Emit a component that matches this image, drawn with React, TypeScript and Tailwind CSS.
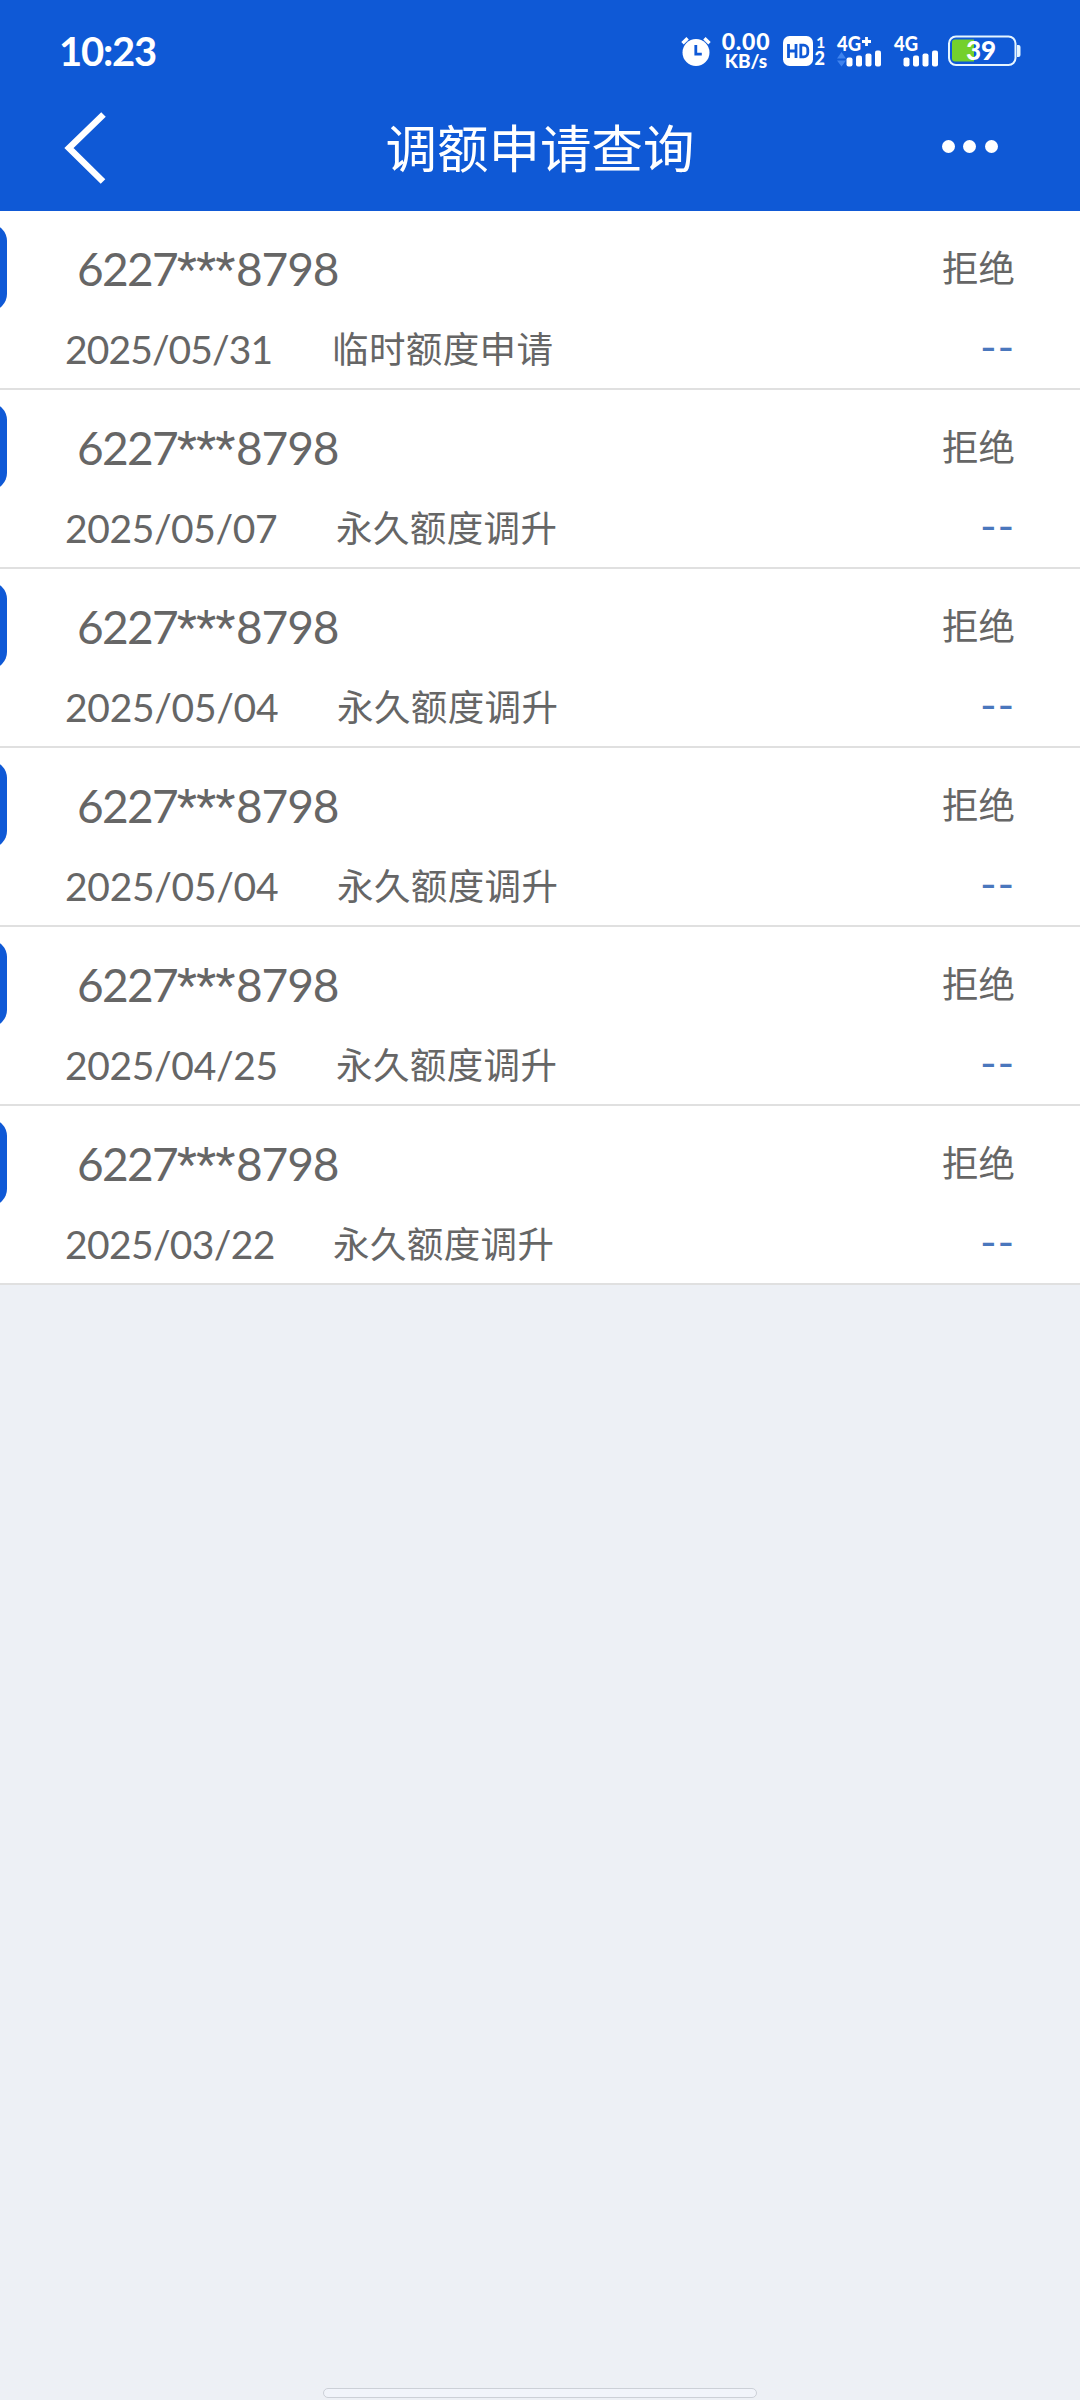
interface QuotaRecord {
  date: string;
  dateClass: string;
  type: string;
}

const records: QuotaRecord[] = [
  { date: "2025/05/31", dateClass: "w-[267px] tracking-[-0.9px]", type: "临时额度申请" },
  { date: "2025/05/07", dateClass: "w-[271px] tracking-[-0.4px]", type: "永久额度调升" },
  { date: "2025/05/04", dateClass: "w-[272px] tracking-[-0.3px]", type: "永久额度调升" },
  { date: "2025/05/04", dateClass: "w-[272px] tracking-[-0.3px]", type: "永久额度调升" },
  { date: "2025/04/25", dateClass: "w-[271px] tracking-[-0.35px]", type: "永久额度调升" },
  { date: "2025/03/22", dateClass: "w-[268px] tracking-[-0.65px]", type: "永久额度调升" },
];

function AlarmIcon() {
  return (
    <svg className="h-[30px] w-[30px]" viewBox="0 0 30 30" fill="none">
      <circle cx="15" cy="16.5" r="13.5" fill="#fff" />
      <path d="M1.5 7.2 6.6 2.2M28.5 7.2 23.4 2.2" stroke="#fff" strokeWidth="3.4" />
      <path d="M14.8 9v9.2h6" stroke="#0f59d6" strokeWidth="2.8" />
    </svg>
  );
}

function NetSpeed() {
  return (
    <div className="flex w-[50px] flex-col items-center font-black text-white">
      <span className="h-[20px] text-[23px] leading-[16px] tracking-[0.8px]">0.00</span>
      <span className="h-[17px] text-[19px] leading-[15px]">KB/s</span>
    </div>
  );
}

function HdIcon() {
  return (
    <svg className="h-[40px] w-[46px]" viewBox="0 0 46 40" fill="none">
      <rect x="0" y="5" width="30" height="30" rx="6.5" fill="#fff" />
      <path
        d="M5.5 13v14M13 13v14M5.5 20H13M17.8 14.2v11.6h3a4 4 0 0 0 4-4v-3.6a4 4 0 0 0-4-4z"
        stroke="#0f59d6"
        strokeWidth="2.8"
      />
      <text x="33" y="17" fontSize="16" fontWeight="700" fill="#fff">
        1
      </text>
      <text x="31.5" y="34" fontSize="18" fontWeight="900" fill="#fff">
        2
      </text>
    </svg>
  );
}

function SignalIcon({ plus = false }: { plus?: boolean }) {
  return (
    <svg className="h-[40px] w-[46px]" viewBox="0 0 46 40">
      <text x="1" y="20" fontSize="20" fontWeight="900" fill="#fff" textLength={24} lengthAdjust="spacingAndGlyphs">
        4G
      </text>
      {plus && (
        <>
          <path d="M26 10.5h9M30.5 6v9" stroke="#fff" strokeWidth="2.8" />
          <path d="M1 27.5 5.5 21l4.5 6.5zM1 29.5l4.5 6 4.5-6z" fill="#3f83ee" />
        </>
      )}
      <rect x="10.5" y="26.5" width="6" height="9" rx="2" fill="#fff" />
      <rect x="20" y="24.5" width="6" height="11" rx="2" fill="#fff" />
      <rect x="29.5" y="22.5" width="6" height="13" rx="2" fill="#fff" />
      <rect x="39" y="19.5" width="6" height="16" rx="2" fill="#fff" />
    </svg>
  );
}

function BatteryIcon() {
  return (
    <svg className="h-[40px] w-[73px]" viewBox="0 0 73 40">
      <rect x="1" y="5.5" width="66.5" height="28.5" rx="7" fill="none" stroke="#e6f5ff" strokeWidth="2" />
      <path d="M7 8.5h19v22H7a3 3 0 0 1-3-3v-16a3 3 0 0 1 3-3z" fill="#74d02c" />
      <path d="M69 14h1.5a2 2 0 0 1 2 2v8a2 2 0 0 1-2 2H69z" fill="#e6f5ff" />
      <text x="18" y="29" fontSize="26" fontWeight="900" fill="#fff" textLength={30}>
        39
      </text>
    </svg>
  );
}

function StatusBar() {
  return (
    <div className="flex h-[102px] items-center justify-between pr-[59px] pl-[59px]">
      <span className="text-[40px] leading-none font-bold tracking-[-1.2px] text-white">10:23</span>
      <div className="flex items-center">
        <AlarmIcon />
        <div className="w-[10px]" />
        <NetSpeed />
        <div className="w-[12px]" />
        <HdIcon />
        <div className="w-[7px]" />
        <SignalIcon plus />
        <div className="w-[11px]" />
        <SignalIcon />
        <div className="w-[9px]" />
        <BatteryIcon />
      </div>
    </div>
  );
}

function NavBar() {
  return (
    <div className="flex h-[109px] items-start justify-between pr-[82px] pl-[64px]">
      <button className="mt-[10px] w-[56px]" aria-label="返回">
        <svg className="h-[72px] w-[42px]" viewBox="0 0 42 72" fill="none">
          <path d="M39.5 2.5 5 36l34 33.5" stroke="#fff" strokeWidth="6.5" />
        </svg>
      </button>
      <h1 className="mt-[8px] pl-[18px] text-[51.5px] leading-[76px] font-normal text-white">调额申请查询</h1>
      <button className="mt-[38px] flex w-[56px] justify-between" aria-label="更多">
        <span className="size-[13px] rounded-full bg-white" />
        <span className="size-[13px] rounded-full bg-white" />
        <span className="size-[13px] rounded-full bg-white" />
      </button>
    </div>
  );
}

function RecordRow({ record }: { record: QuotaRecord }) {
  return (
    <li className="flex h-[179px] overflow-hidden border-b-2 border-[#e0e0e0] bg-white text-[#666]">
      {/* Bank badge, mostly off the left edge */}
      <div className="mt-[13px] -ml-[57px] h-[87px] w-[64px] shrink-0 rounded-[17px] bg-[#0f59d6]" />
      <div className="flex flex-1 flex-col pt-[28px] pr-[65px] pl-[58px]">
        <div className="flex h-[60px] items-center justify-between">
          <span className="flex pl-[12px] text-[46px] leading-[60px]">
            <span className="w-[100px] tracking-[-1.7px]">6227</span>
            <span className="w-[59px] font-['Roboto'] tracking-[-0.5px]">***</span>
            <span className="tracking-[-1.1px]">8798</span>
          </span>
          <span className="-mt-[2px] text-[36.5px] leading-[60px]">拒绝</span>
        </div>
        <div className="mt-[20px] flex h-[60px] items-center">
          <span className={`text-[39px] leading-[60px] ${record.dateClass}`}>{record.date}</span>
          <span className="text-[36.5px] leading-[60px] tracking-[0.4px]">{record.type}</span>
          <span className="-mt-[6px] ml-auto text-[45px] leading-[60px] tracking-[0.8px] text-[#4a77bd]">--</span>
        </div>
      </div>
    </li>
  );
}

export default function App() {
  return (
    <div className="flex h-[2400px] w-[1080px] flex-col overflow-hidden bg-[#edf0f5] font-['Lato','Noto_Sans_CJK_SC',sans-serif]">
      <header className="h-[211px] shrink-0 bg-[#0f59d6]">
        <StatusBar />
        <NavBar />
      </header>
      <ul>
        {records.map((record, i) => (
          <RecordRow key={i} record={record} />
        ))}
      </ul>
      {/* Gesture bar */}
      <div className="mx-auto mt-auto mb-[2px] h-[10px] w-[434px] rounded-full border border-[#ccd0d7] bg-[#f1f4fa]" />
    </div>
  );
}
